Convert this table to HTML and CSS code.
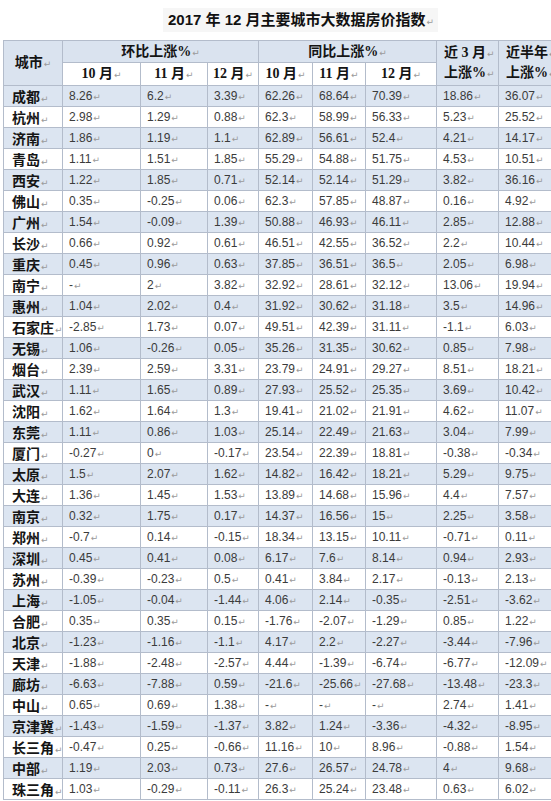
FILE: index.html
```html
<!DOCTYPE html>
<html lang="zh-CN">
<head>
<meta charset="utf-8">
<title>2017年12月主要城市大数据房价指数</title>
<link rel="stylesheet" href="styles.css">
</head>
<body>
<div class="page">
  <div class="title-wrap"><span class="title">2017 年 12 月主要城市大数据房价指数<span class="rm">↵</span></span></div>
  <table class="grid">
    <colgroup>
      <col class="c-city"><col class="c1"><col class="c2"><col class="c3"><col class="c4"><col class="c5"><col class="c6"><col class="c7"><col class="c8">
    </colgroup>
    <thead>
      <tr class="h1">
        <th rowspan="2" class="city-h">城市<span class="rm">↵</span></th>
        <th colspan="3">环比上涨%<span class="rm">↵</span></th>
        <th colspan="3">同比上涨%<span class="rm">↵</span></th>
        <th rowspan="2" class="two">近 <span class="num">3</span> 月<span class="rm">↵</span><br>上涨%<span class="rm">↵</span></th>
        <th rowspan="2" class="two">近半年<span class="rm">↵</span><br>上涨%<span class="rm">↵</span></th>
      </tr>
      <tr class="h2">
        <th><span class="num">10</span> 月<span class="rm">↵</span></th>
        <th><span class="num">11</span> 月<span class="rm">↵</span></th>
        <th><span class="num">12</span> 月<span class="rm">↵</span></th>
        <th><span class="num">10</span> 月<span class="rm">↵</span></th>
        <th><span class="num">11</span> 月<span class="rm">↵</span></th>
        <th><span class="num">12</span> 月<span class="rm">↵</span></th>
      </tr>
    </thead>
    <tbody id="rows"></tbody>
  </table>
</div>
<script src="app.js"></script>
</body>
</html>
```

FILE: styles.css
```css
html, body {
  margin: 0;
  padding: 0;
  background: #ffffff;
}
body {
  width: 551px;
  height: 801px;
  overflow: hidden;
  font-family: "Liberation Sans", "Noto Sans CJK SC", sans-serif;
}
.page {
  padding-left: 3px;
}
.title-wrap {
  height: 40px;
  box-sizing: border-box;
  padding-top: 8px;
  padding-left: 160px;
}
.title {
  display: inline-block;
  height: 24px;
  line-height: 24px;
  padding: 0 4px 0 5px;
  background: #f6f6f6;
  font-family: "Liberation Sans", "Noto Sans CJK SC", sans-serif;
  font-weight: 700;
  font-size: 15px;
  color: #111111;
}
.rm {
  font-family: "DejaVu Sans", sans-serif;
  font-weight: 400;
  font-size: 9px;
  line-height: 0;
  color: #9a9a9a;
  margin-left: 1px;
}
.grid {
  border-collapse: collapse;
  table-layout: fixed;
  width: 557px;
}
.c-city { width: 59px; }
.c1 { width: 78px; }
.c2 { width: 67px; }
.c3 { width: 51px; }
.c4 { width: 54px; }
.c5 { width: 53px; }
.c6 { width: 71px; }
.c7 { width: 62px; }
.c8 { width: 62px; }
.grid th, .grid td {
  border: 1px solid #b3bccb;
  padding: 0;
  white-space: nowrap;
  overflow: hidden;
}
.grid th {
  font-family: "Liberation Serif", "Noto Sans CJK SC", serif;
  font-weight: 700;
  font-size: 14px;
  line-height: 18px;
  color: #141414;
  text-align: center;
}
.grid th .num {
  font-family: "Liberation Serif", serif;
}
.h1 th {
  background: #dae3ef;
  height: 21px;
}
.h2 th {
  background: #ffffff;
  height: 22px;
}
.grid th.two {
  text-align: left;
  padding-left: 7px;
  line-height: 20px;
}
.grid td {
  height: 20px;
  line-height: 18px;
  padding-left: 6px;
  font-size: 12px;
  color: #3b3b3b;
}
.grid td.city {
  padding-left: 8px;
  font-family: "Noto Sans CJK SC", sans-serif;
  font-weight: 700;
  font-size: 14px;
  line-height: 18px;
  color: #151515;
}
.grid tr.alt td {
  background: #dce5f1;
}
```

FILE: app.js
```js
const data = [
  ["成都","8.26","6.2","3.39","62.26","68.64","70.39","18.86","36.07"],
  ["杭州","2.98","1.29","0.88","62.3","58.99","56.33","5.23","25.52"],
  ["济南","1.86","1.19","1.1","62.89","56.61","52.4","4.21","14.17"],
  ["青岛","1.11","1.51","1.85","55.29","54.88","51.75","4.53","10.51"],
  ["西安","1.22","1.85","0.71","52.14","52.14","51.29","3.82","36.16"],
  ["佛山","0.35","-0.25","0.06","62.3","57.85","48.87","0.16","4.92"],
  ["广州","1.54","-0.09","1.39","50.88","46.93","46.11","2.85","12.88"],
  ["长沙","0.66","0.92","0.61","46.51","42.55","36.52","2.2","10.44"],
  ["重庆","0.45","0.96","0.63","37.85","36.51","36.5","2.05","6.98"],
  ["南宁","-","2","3.82","32.92","28.61","32.12","13.06","19.94"],
  ["惠州","1.04","2.02","0.4","31.92","30.62","31.18","3.5","14.96"],
  ["石家庄","-2.85","1.73","0.07","49.51","42.39","31.11","-1.1","6.03"],
  ["无锡","1.06","-0.26","0.05","35.26","31.35","30.62","0.85","7.98"],
  ["烟台","2.39","2.59","3.31","23.79","24.91","29.27","8.51","18.21"],
  ["武汉","1.11","1.65","0.89","27.93","25.52","25.35","3.69","10.42"],
  ["沈阳","1.62","1.64","1.3","19.41","21.02","21.91","4.62","11.07"],
  ["东莞","1.11","0.86","1.03","25.14","22.49","21.63","3.04","7.99"],
  ["厦门","-0.27","0","-0.17","23.54","22.39","18.81","-0.38","-0.34"],
  ["太原","1.5","2.07","1.62","14.82","16.42","18.21","5.29","9.75"],
  ["大连","1.36","1.45","1.53","13.89","14.68","15.96","4.4","7.57"],
  ["南京","0.32","1.75","0.17","14.37","16.56","15","2.25","3.58"],
  ["郑州","-0.7","0.14","-0.15","18.34","13.15","10.11","-0.71","0.11"],
  ["深圳","0.45","0.41","0.08","6.17","7.6","8.14","0.94","2.93"],
  ["苏州","-0.39","-0.23","0.5","0.41","3.84","2.17","-0.13","2.13"],
  ["上海","-1.05","-0.04","-1.44","4.06","2.14","-0.35","-2.51","-3.62"],
  ["合肥","0.35","0.35","0.15","-1.76","-2.07","-1.29","0.85","1.22"],
  ["北京","-1.23","-1.16","-1.1","4.17","2.2","-2.27","-3.44","-7.96"],
  ["天津","-1.88","-2.48","-2.57","4.44","-1.39","-6.74","-6.77","-12.09"],
  ["廊坊","-6.63","-7.88","0.59","-21.6","-25.66","-27.68","-13.48","-23.3"],
  ["中山","0.65","0.69","1.38","-","-","-","2.74","1.41"],
  ["京津冀","-1.43","-1.59","-1.37","3.82","1.24","-3.36","-4.32","-8.95"],
  ["长三角","-0.47","0.25","-0.66","11.16","10","8.96","-0.88","1.54"],
  ["中部","1.19","2.03","0.73","27.6","26.57","24.78","4","9.68"],
  ["珠三角","1.03","-0.29","-0.11","26.3","25.24","23.48","0.63","6.02"]
];
const tbody = document.getElementById("rows");
data.forEach((row, i) => {
  const tr = document.createElement("tr");
  if (i % 2 === 0) tr.className = "alt";
  row.forEach((v, j) => {
    const td = document.createElement("td");
    if (j === 0) td.className = "city";
    td.appendChild(document.createTextNode(v));
    const rm = document.createElement("span");
    rm.className = "rm";
    rm.textContent = "↵";
    td.appendChild(rm);
    tr.appendChild(td);
  });
  tbody.appendChild(tr);
});
```
